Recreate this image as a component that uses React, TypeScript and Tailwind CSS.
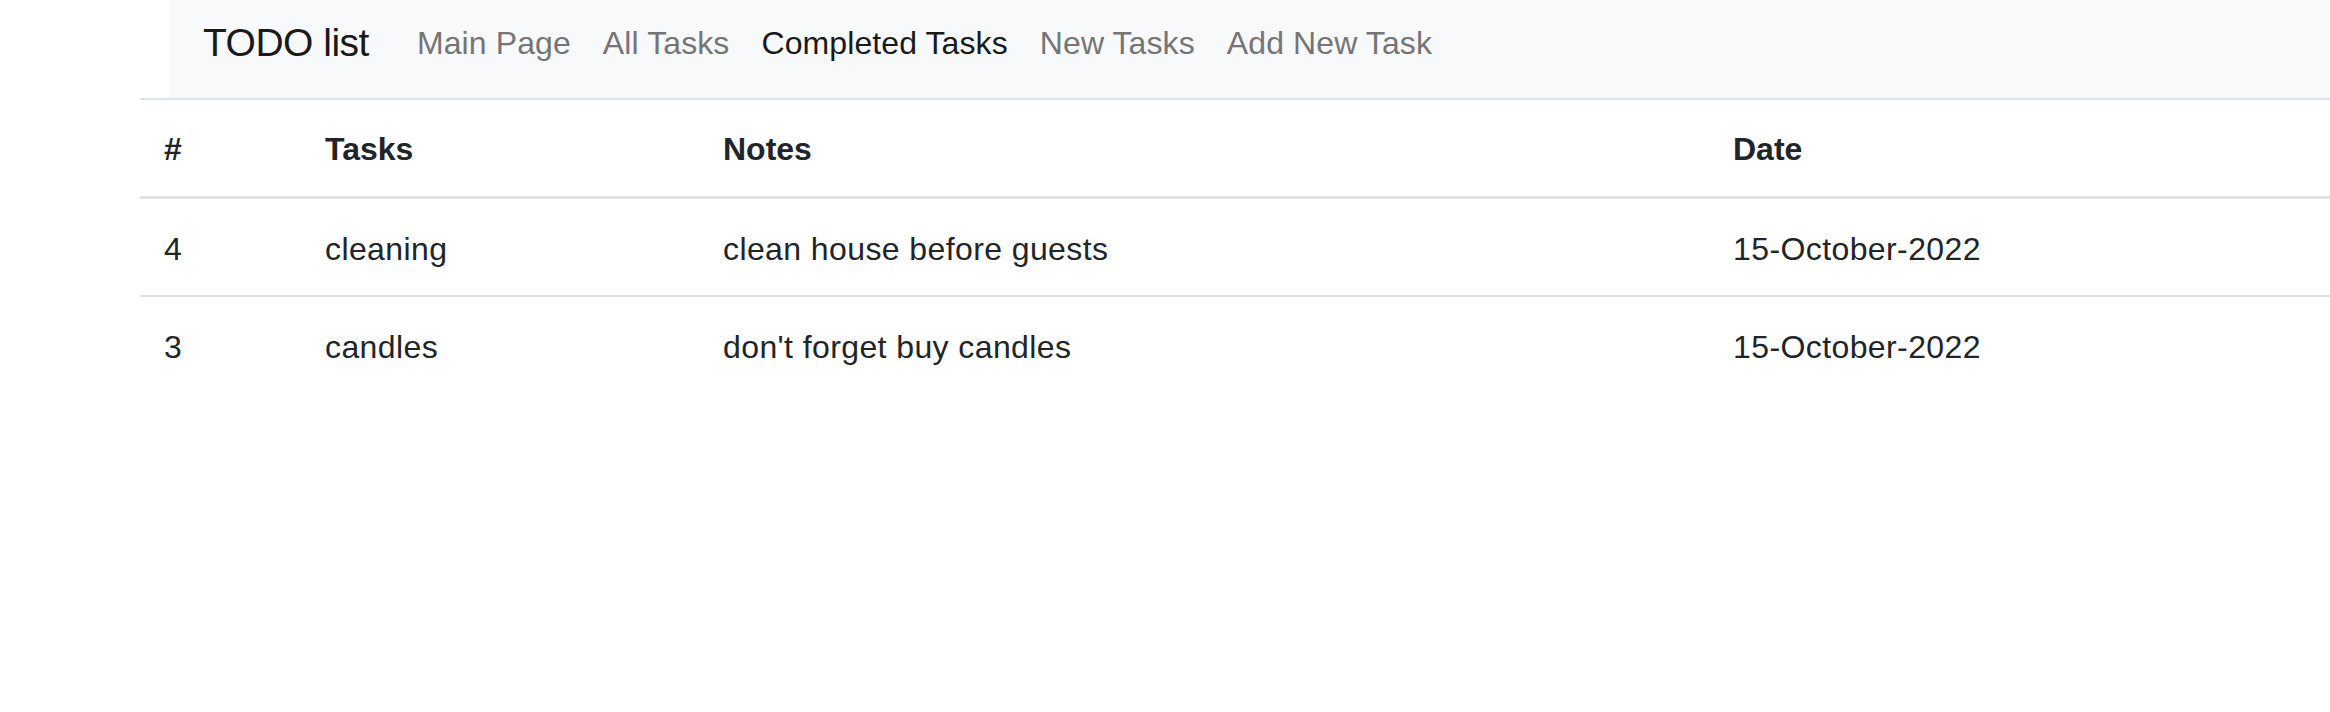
import React from 'react';

interface Task {
  id: number;
  title: string;
  notes: string;
  date: string;
}

const TASKS: Task[] = [
  { id: 4, title: 'cleaning', notes: 'clean house before guests', date: '15-October-2022' },
  { id: 3, title: 'candles', notes: "don't forget buy candles", date: '15-October-2022' },
];

const NAV_LINKS = [
  { label: 'Main Page', active: false },
  { label: 'All Tasks', active: false },
  { label: 'Completed Tasks', active: true },
  { label: 'New Tasks', active: false },
  { label: 'Add New Task', active: false },
];

export default function App() {
  return (
    <div className="min-h-[712px] bg-white text-[#212529] font-['Liberation_Sans',Arial,sans-serif]">
      <nav className="ml-[170px] h-[98px] bg-[#f8f9fa] flex items-start pt-[13px] pl-[33px]">
        <a className="text-[39px] leading-[60px] text-[#1a1a1a] mr-[32px] tracking-[-0.5px]">TODO list</a>
        <ul className="flex">
          {NAV_LINKS.map((link) => (
            <li key={link.label}>
              <a
                className={`block px-[16px] text-[32px] leading-[60px] tracking-[0.1px] ${
                  link.active ? 'text-[#1a1a1a]' : 'text-[#757575]'
                }`}
              >
                {link.label}
              </a>
            </li>
          ))}
        </ul>
      </nav>

      <div className="ml-[140px]">
        <table className="w-full table-fixed border-collapse text-[32px] leading-[48px]">
          <colgroup>
            <col className="w-[161px]" />
            <col className="w-[398px]" />
            <col className="w-[1010px]" />
            <col />
          </colgroup>
          <thead>
            <tr className="border-t-2 border-b-[3px] border-[#dee2e6]">
              <th className="text-left font-bold pt-[25px] pb-[23px] pl-[24px]">#</th>
              <th className="text-left font-bold pt-[25px] pb-[23px] pl-[24px]">Tasks</th>
              <th className="text-left font-bold pt-[25px] pb-[23px] pl-[24px]">Notes</th>
              <th className="text-left font-bold pt-[25px] pb-[23px] pl-[24px]">Date</th>
            </tr>
          </thead>
          <tbody className="tracking-[0.4px]">
            {TASKS.map((task, i) => (
              <tr
                key={task.id}
                className={i < TASKS.length - 1 ? 'border-b-2 border-[#dee2e6]' : ''}
              >
                <td className="pt-[26px] pb-[22px] pl-[24px]">{task.id}</td>
                <td className="pt-[26px] pb-[22px] pl-[24px]">{task.title}</td>
                <td className="pt-[26px] pb-[22px] pl-[24px]">{task.notes}</td>
                <td className="pt-[26px] pb-[22px] pl-[24px]">{task.date}</td>
              </tr>
            ))}
          </tbody>
        </table>
      </div>
    </div>
  );
}
